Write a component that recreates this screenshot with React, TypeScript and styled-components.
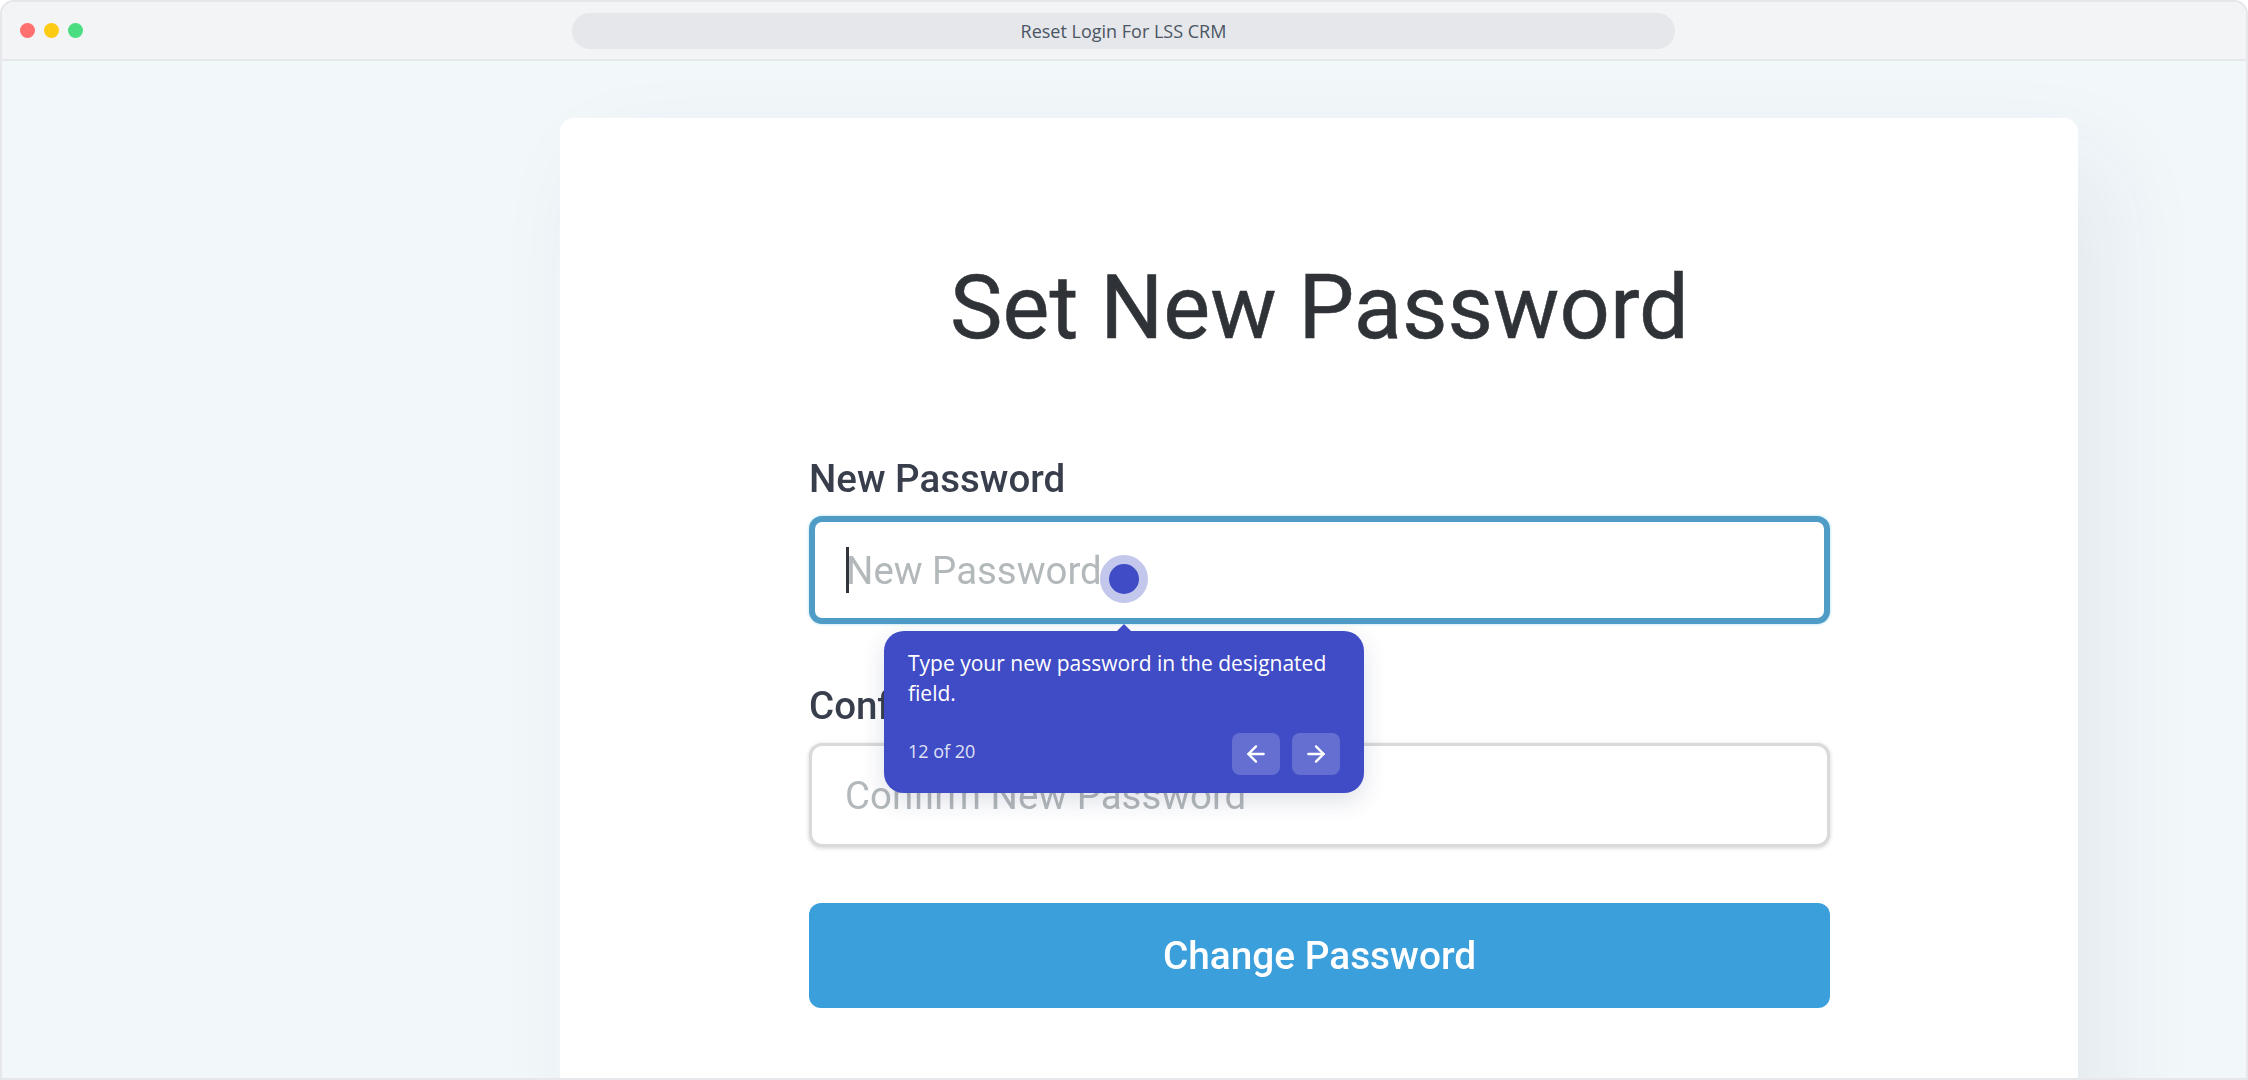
import React from 'react';
import styled, { createGlobalStyle } from 'styled-components';
import { ArrowLeft, ArrowRight } from 'lucide-react';

const GlobalStyle = createGlobalStyle`
  html, body {
    margin: 0;
    width: 2248px;
    height: 1080px;
    overflow: hidden;
    background: #fff;
  }
`;

const Frame = styled.div`
  position: relative;
  box-sizing: border-box;
  width: 2248px;
  height: 1080px;
  border: 2px solid #e5e7eb;
  border-radius: 14px 14px 0 0;
  overflow: hidden;
  display: flex;
  flex-direction: column;
  background: #f2f7fa;
`;

const TitleBar = styled.header`
  box-sizing: border-box;
  height: 59px;
  flex: none;
  display: grid;
  grid-template-columns: 552px 1103px 1fr;
  align-items: center;
  padding-left: 18px;
  background: #f3f4f6;
  border-bottom: 2px solid #e5e7eb;
`;

const Dots = styled.div`
  display: flex;
  gap: 9px;
`;

const Dot = styled.span<{ $color: string }>`
  width: 15px;
  height: 15px;
  border-radius: 50%;
  background: ${p => p.$color};
`;

const Address = styled.div`
  height: 36px;
  border-radius: 18px;
  background: #e5e7eb;
  display: flex;
  align-items: center;
  justify-content: center;
  font: 400 18px 'Open Sans', sans-serif;
  color: #4b5563;
`;

const Stage = styled.main`
  flex: 1;
  min-height: 0;
  padding: 57px 0 0 558px;
`;

const Card = styled.section`
  box-sizing: border-box;
  width: 1518px;
  height: 1100px;
  padding: 139px 248px 0 249px;
  background: #fff;
  border-radius: 14px;
  box-shadow: 30px 40px 100px rgba(40, 60, 80, 0.07);
  display: flex;
  flex-direction: column;
  filter: blur(0.5px);
`;

const Title = styled.h1`
  margin: 0 0 98px;
  text-align: center;
  font: 400 88.4px/1.17 Roboto, sans-serif;
  color: #2f3338;
  -webkit-text-stroke: 0.5px #2f3338;
`;

const Label = styled.label`
  font: 500 38.5px/42px Roboto, sans-serif;
  color: #383e4c;
  margin-bottom: 16px;
`;

const Field = styled.div<{ $focused?: boolean }>`
  box-sizing: border-box;
  height: ${p => (p.$focused ? '108px' : '104px')};
  margin-bottom: ${p => (p.$focused ? '61px' : '56px')};
  padding-left: ${p => (p.$focused ? '31px' : '33px')};
  display: flex;
  align-items: center;
  border-radius: 13px;
  background: #fff;
  border: ${p => (p.$focused ? '6px solid #4f9cc6' : '3px solid #d8dadb')};
  box-shadow: ${p => (p.$focused ? '0 0 3px rgba(80, 190, 230, 0.5)' : '0 1px 4px rgba(0, 0, 0, 0.18)')};
  font: 400 38.4px Roboto, sans-serif;
  color: #b3b8ba;
  white-space: nowrap;
`;

const Caret = styled.span`
  width: 3px;
  height: 46px;
  margin-right: -3px;
  background: #30343a;
`;

const Submit = styled.button`
  height: 105px;
  border: none;
  border-radius: 12px;
  background: #3b9fdc;
  color: #fff;
  font: 500 38.8px Roboto, sans-serif;
`;

const Hotspot = styled.div`
  position: absolute;
  left: 1098px;
  top: 553px;
  box-sizing: border-box;
  width: 48px;
  height: 48px;
  border: 9px solid #c3c7ec;
  border-radius: 50%;
  background: #3f4cc5;
`;

const Tooltip = styled.aside`
  position: absolute;
  left: 882px;
  top: 629px;
  box-sizing: border-box;
  width: 480px;
  height: 162px;
  padding: 17px 24px 0;
  background: #3f4cc5;
  border-radius: 20px;
  box-shadow: 0 8px 24px rgba(30, 40, 90, 0.14);
  color: #fff;
  display: flex;
  flex-direction: column;

  &::before {
    content: '';
    position: absolute;
    top: -7px;
    left: 233px;
    width: 0;
    height: 0;
    border-left: 7px solid transparent;
    border-right: 7px solid transparent;
    border-bottom: 7px solid #3f4cc5;
  }
`;

const TipText = styled.p`
  margin: 0;
  font: 400 21px/30px 'Open Sans', sans-serif;
`;

const TipFooter = styled.div`
  margin-top: 25px;
  display: flex;
  align-items: center;
  justify-content: space-between;
`;

const Counter = styled.span`
  font: 400 18px 'Open Sans', sans-serif;
  color: #dfe1f5;
  margin-top: -6px;
`;

const NavButtons = styled.div`
  display: flex;
  gap: 12px;
`;

const NavButton = styled.button`
  width: 48px;
  height: 42px;
  padding: 0;
  border: none;
  border-radius: 8px;
  background: #656fd2;
  color: #fff;
  display: flex;
  align-items: center;
  justify-content: center;
`;

export default function App() {
  return (
    <>
      <GlobalStyle />
      <Frame>
        <TitleBar>
          <Dots>
            <Dot $color="#ff7070" />
            <Dot $color="#fdcb14" />
            <Dot $color="#4ade80" />
          </Dots>
          <Address>Reset Login For LSS CRM</Address>
        </TitleBar>
        <Stage>
          <Card>
            <Title>Set New Password</Title>
            <Label>New Password</Label>
            <Field $focused>
              <Caret />
              New Password
            </Field>
            <Label>Confirm New Password</Label>
            <Field>Confirm New Password</Field>
            <Submit>Change Password</Submit>
          </Card>
        </Stage>
        <Hotspot />
        <Tooltip>
          <TipText>Type your new password in the designated field.</TipText>
          <TipFooter>
            <Counter>12 of 20</Counter>
            <NavButtons>
              <NavButton><ArrowLeft size={26} strokeWidth={2.2} /></NavButton>
              <NavButton><ArrowRight size={26} strokeWidth={2.2} /></NavButton>
            </NavButtons>
          </TipFooter>
        </Tooltip>
      </Frame>
    </>
  );
}
